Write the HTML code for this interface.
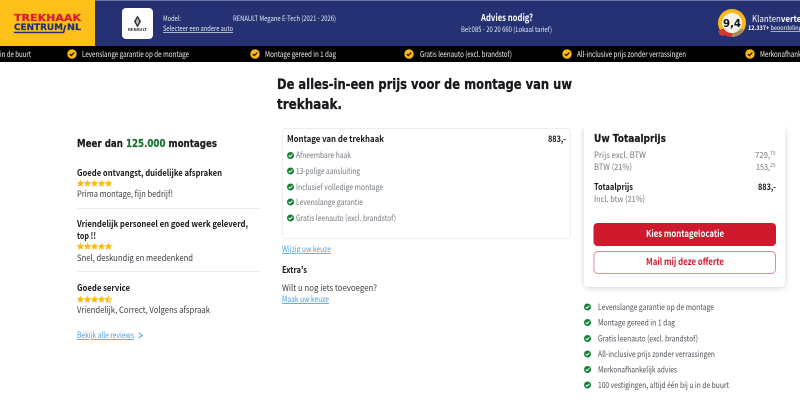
<!DOCTYPE html>
<html lang="nl"><head><meta charset="utf-8"><title>Trekhaak Centrum</title>
<style>
html,body{margin:0;padding:0;background:#fff;width:800px;height:404px;overflow:hidden}
svg{display:block;filter:blur(.2px)}
text{font-family:"Noto Sans CJK SC","Liberation Sans",sans-serif;white-space:pre}
.t{font-size:8.800px;fill:#3c4045}
.g{font-size:8.400px;fill:#74797f}
.b{font-size:9px;font-weight:700;fill:#17191d}
.h{font-family:"DejaVu Sans",sans-serif;font-weight:700;fill:#17191d;stroke:#17191d;stroke-width:.3}
.l{font-size:8.400px;fill:#4a9fe0;text-decoration:underline}
.w{font-size:7.200px;fill:#e8eaf4}
.m{font-size:7.800px;fill:#f2f2f2}
.s{font-size:8.400px;fill:#4c5157}
</style></head><body>
<svg width="800" height="404" viewBox="0 0 800 404" xmlns="http://www.w3.org/2000/svg">
<defs>
<filter id="sh" x="-10%" y="-10%" width="120%" height="120%"><feGaussianBlur stdDeviation="3"/></filter>
<path id="st" d="M3.500-.4L4.600 2.100 7.300 2.300 5.300 4.100 5.900 6.800 3.500 5.400 1.100 6.800 1.700 4.100-.3 2.300 2.400 2.100Z" fill="#fdb913"/>
<g id="s5"><use href="#st"/><use href="#st" x="7"/><use href="#st" x="14"/><use href="#st" x="21"/><use href="#st" x="28"/></g>
<g id="ck"><circle r="3.500" fill="#15803a"/><path d="M-1.800 0L-.5 1.300 1.800-1.200" fill="none" stroke="#fff" stroke-width="1"/></g>
<g id="yc"><circle r="4.700" fill="#fdb913"/><path d="M-2.300 0L-.7 1.600 2.300-1.500" fill="none" stroke="#14120c" stroke-width="1.200"/></g>
</defs>

<!-- header -->
<rect width="800" height="46" fill="#253172"/>
<rect width="800" height="1" fill="#6a74a6"/>
<rect width="95" height="46" fill="#fdc01a"/>
<text x="14" y="21" textLength="67" lengthAdjust="spacingAndGlyphs" style="font-family:'DejaVu Sans',sans-serif;font-size:10px;font-weight:700;fill:#d8202f;stroke:#d8202f;stroke-width:.3">TREKHAAK</text>
<text x="14" y="30" textLength="49" lengthAdjust="spacingAndGlyphs" style="font-family:'DejaVu Sans',sans-serif;font-size:8.500px;font-weight:700;fill:#26306a;stroke:#26306a;stroke-width:.2">CENTRUM</text>
<text x="67" y="30" textLength="14" lengthAdjust="spacingAndGlyphs" style="font-family:'DejaVu Sans',sans-serif;font-size:8.500px;font-weight:700;fill:#26306a;stroke:#26306a;stroke-width:.2">NL</text>
<path d="M14 32.500H63.500L65.500 25" fill="none" stroke="#26306a" stroke-width="1.600"/>

<rect x="122" y="8" width="31" height="31" rx="4" fill="#fff"/>
<path d="M137.500 15.500L141 21.500 137.500 27.500 134 21.500Z" fill="#2a2a2a"/>
<path d="M137.500 18L139.300 21.500 137.500 25 135.700 21.500Z" fill="#bbb"/>
<text x="128" y="31" textLength="19" lengthAdjust="spacingAndGlyphs" style="font-size:3.500px;font-weight:700;fill:#222">RENAULT</text>

<text class="w" x="163" y="21" textLength="18" lengthAdjust="spacingAndGlyphs">Model:</text>
<text class="w" x="233" y="21" textLength="103" lengthAdjust="spacingAndGlyphs">RENAULT Megane E-Tech (2021 - 2026)</text>
<text class="w" x="163" y="31" textLength="70" lengthAdjust="spacingAndGlyphs" text-decoration="underline">Selecteer een andere auto</text>
<text x="481" y="21" textLength="52" lengthAdjust="spacingAndGlyphs" style="font-size:9.500px;font-weight:700;fill:#fff">Advies nodig?</text>
<text class="w" x="461" y="32" textLength="91" lengthAdjust="spacingAndGlyphs">Bel:085 - 20 20 660 (Lokaal tarief)</text>

<!-- badge -->
<circle cx="732" cy="23" r="14" fill="#fdb913"/>
<path d="M732 37A14 14 0 0 1 720 30L728 26 732 30Z" fill="#d8352c"/>
<path d="M732 37A14 14 0 0 0 744 30L736 27 732 30Z" fill="#a98a5e"/>
<path d="M718 31L725 28 724 36 720 35Z" fill="#d8352c"/>
<circle cx="732" cy="23" r="10" fill="#f4f1ea"/>
<text x="723" y="27" textLength="18" lengthAdjust="spacingAndGlyphs" style="font-family:'DejaVu Sans',sans-serif;font-size:11px;font-weight:700;fill:#111">9,4</text>
<text x="752" y="22" textLength="64" lengthAdjust="spacingAndGlyphs" style="font-size:9px;fill:#fff">Klanten<tspan font-weight="700">vertellen</tspan></text>
<text x="748" y="30" textLength="60" lengthAdjust="spacingAndGlyphs" style="font-size:6px;font-weight:700;fill:#fff">12.337+ <tspan font-weight="400" text-decoration="underline">beoordelingen</tspan></text>

<!-- usp bar -->
<rect y="46" width="800" height="16" fill="#000"/>
<text class="m" x="0" y="57" textLength="31" lengthAdjust="spacingAndGlyphs">in de buurt</text>
<use href="#yc" x="72" y="54"/><text class="m" x="82" y="57" textLength="107" lengthAdjust="spacingAndGlyphs">Levenslange garantie op de montage</text>
<use href="#yc" x="255" y="54"/><text class="m" x="265" y="57" textLength="71" lengthAdjust="spacingAndGlyphs">Montage gereed in 1 dag</text>
<use href="#yc" x="409" y="54"/><text class="m" x="420" y="57" textLength="92" lengthAdjust="spacingAndGlyphs">Gratis leenauto (excl. brandstof)</text>
<use href="#yc" x="567" y="54"/><text class="m" x="577" y="57" textLength="109" lengthAdjust="spacingAndGlyphs">All-inclusive prijs zonder verrassingen</text>
<use href="#yc" x="750" y="54"/><text class="m" x="760" y="57" textLength="73" lengthAdjust="spacingAndGlyphs">Merkonafhankelijk advies</text>

<!-- heading -->
<text class="h" x="277" y="89" textLength="295" lengthAdjust="spacingAndGlyphs" font-size="14">De alles-in-een prijs voor de montage van uw</text>
<text class="h" x="277" y="109" textLength="65" lengthAdjust="spacingAndGlyphs" font-size="14">trekhaak.</text>

<!-- reviews -->
<text class="h" x="77" y="147" textLength="140" lengthAdjust="spacingAndGlyphs" font-size="11" style="stroke-width:.2">Meer dan <tspan fill="#15702f" stroke="#15702f">125.000</tspan> montages</text>
<text class="b" x="77" y="176" textLength="145" lengthAdjust="spacingAndGlyphs">Goede ontvangst, duidelijke afspraken</text>
<use href="#s5" x="77" y="180"/>
<text class="t" x="77" y="197" textLength="96" lengthAdjust="spacingAndGlyphs">Prima montage, fijn bedrijf!</text>
<rect x="77" y="208" width="183" height="1" fill="#ececec"/>
<text class="b" x="77" y="227" textLength="171" lengthAdjust="spacingAndGlyphs">Vriendelijk personeel en goed werk geleverd,</text>
<text class="b" x="77" y="239" textLength="19" lengthAdjust="spacingAndGlyphs">top !!</text>
<use href="#s5" x="77" y="243"/>
<text class="t" x="77" y="261" textLength="116" lengthAdjust="spacingAndGlyphs">Snel, deskundig en meedenkend</text>
<rect x="77" y="271" width="183" height="1" fill="#ececec"/>
<text class="b" x="77" y="291" textLength="53" lengthAdjust="spacingAndGlyphs">Goede service</text>
<use href="#st" x="77" y="296"/><use href="#st" x="84" y="296"/><use href="#st" x="91" y="296"/><use href="#st" x="98" y="296"/>
<path d="M108.500 296L109.500 298.300 111.900 298.500 110.100 300.100 110.600 302.500 108.500 301.200 106.400 302.500 106.900 300.100 105.100 298.500 107.500 298.300Z" fill="none" stroke="#fdb913" stroke-width=".7"/>
<path d="M108.500 296V301.200L106.400 302.500 106.900 300.100 105.100 298.500 107.500 298.300Z" fill="#fdb913"/>
<text class="t" x="77" y="313" textLength="133" lengthAdjust="spacingAndGlyphs">Vriendelijk, Correct, Volgens afspraak</text>
<text class="l" x="77" y="338" textLength="57" lengthAdjust="spacingAndGlyphs">Bekijk alle reviews</text>
<path d="M138.500 333L142.500 335.500 138.500 338" fill="none" stroke="#4a9fe0" stroke-width=".9"/>

<!-- product card -->
<rect x="282.500" y="128.500" width="288" height="110" rx="3" fill="#fff" stroke="#eeeeee"/>
<text class="b" x="287" y="142" textLength="97" lengthAdjust="spacingAndGlyphs">Montage van de trekhaak</text>
<text class="b" x="548" y="142" textLength="18" lengthAdjust="spacingAndGlyphs">883,-</text>
<use href="#ck" x="290.500" y="155.500"/><text class="g" x="296" y="158" textLength="55" lengthAdjust="spacingAndGlyphs">Afneembare haak</text>
<use href="#ck" x="290.500" y="171"/><text class="g" x="296" y="174" textLength="64" lengthAdjust="spacingAndGlyphs">13-polige aansluiting</text>
<use href="#ck" x="290.500" y="187"/><text class="g" x="296" y="190" textLength="87" lengthAdjust="spacingAndGlyphs">Inclusief volledige montage</text>
<use href="#ck" x="290.500" y="202"/><text class="g" x="296" y="205" textLength="67" lengthAdjust="spacingAndGlyphs">Levenslange garantie</text>
<use href="#ck" x="290.500" y="218"/><text class="g" x="296" y="221" textLength="100" lengthAdjust="spacingAndGlyphs">Gratis leenauto (excl. brandstof)</text>

<text class="l" x="282" y="252" textLength="49" lengthAdjust="spacingAndGlyphs">Wijzig uw keuze</text>
<text class="b" x="282" y="273" textLength="25" lengthAdjust="spacingAndGlyphs">Extra's</text>
<text class="t" x="282" y="291" textLength="95" lengthAdjust="spacingAndGlyphs">Wilt u nog iets toevoegen?</text>
<text class="l" x="282" y="302" textLength="47" lengthAdjust="spacingAndGlyphs">Maak uw keuze</text>

<!-- total card -->
<rect x="584" y="128" width="201" height="160" rx="4" fill="#000" opacity=".18" filter="url(#sh)"/>
<rect x="584" y="124" width="201" height="163" rx="4" fill="#fff"/>
<text class="h" x="594" y="142" textLength="72" lengthAdjust="spacingAndGlyphs" font-size="11" style="stroke-width:.2">Uw Totaalprijs</text>
<text class="g" x="594" y="158" textLength="52" lengthAdjust="spacingAndGlyphs">Prijs excl. BTW</text>
<text class="g" x="755" y="158" textLength="15" lengthAdjust="spacingAndGlyphs">729,</text><text class="g" x="770" y="155" style="font-size:5px">75</text>
<text class="g" x="594" y="170" textLength="38" lengthAdjust="spacingAndGlyphs">BTW (21%)</text>
<text class="g" x="756" y="170" textLength="14" lengthAdjust="spacingAndGlyphs">153,</text><text class="g" x="770" y="167" style="font-size:5px">25</text>
<text class="b" x="594" y="190" textLength="39" lengthAdjust="spacingAndGlyphs">Totaalprijs</text>
<text class="b" x="758" y="190" textLength="18" lengthAdjust="spacingAndGlyphs">883,-</text>
<text class="g" x="594" y="202" textLength="51" lengthAdjust="spacingAndGlyphs">Incl. btw (21%)</text>
<rect x="593.500" y="223" width="182.500" height="23" rx="4" fill="#cf1a2e"/>
<text x="646" y="237" textLength="78" lengthAdjust="spacingAndGlyphs" style="font-size:9.200px;font-weight:700;fill:#fff">Kies montagelocatie</text>
<rect x="594" y="251.500" width="181.500" height="22" rx="4" fill="#fff" stroke="#e58a92"/>
<text x="646" y="265" textLength="78" lengthAdjust="spacingAndGlyphs" style="font-size:9.200px;font-weight:700;fill:#cf1a2e">Mail mij deze offerte</text>

<!-- usps -->
<use href="#ck" x="587.500" y="307"/><text class="s" x="598" y="310" textLength="116" lengthAdjust="spacingAndGlyphs">Levenslange garantie op de montage</text>
<use href="#ck" x="587.500" y="322.500"/><text class="s" x="598" y="325.500" textLength="77" lengthAdjust="spacingAndGlyphs">Montage gereed in 1 dag</text>
<use href="#ck" x="587.500" y="338.500"/><text class="s" x="598" y="341.500" textLength="100" lengthAdjust="spacingAndGlyphs">Gratis leenauto (excl. brandstof)</text>
<use href="#ck" x="587.500" y="354"/><text class="s" x="598" y="357" textLength="117" lengthAdjust="spacingAndGlyphs">All-inclusive prijs zonder verrassingen</text>
<use href="#ck" x="587.500" y="369.500"/><text class="s" x="598" y="372.500" textLength="79" lengthAdjust="spacingAndGlyphs">Merkonafhankelijk advies</text>
<use href="#ck" x="587.500" y="385"/><text class="s" x="598" y="388" textLength="131" lengthAdjust="spacingAndGlyphs">100 vestigingen, altijd één bij u in de buurt</text>
</svg>
</body></html>
